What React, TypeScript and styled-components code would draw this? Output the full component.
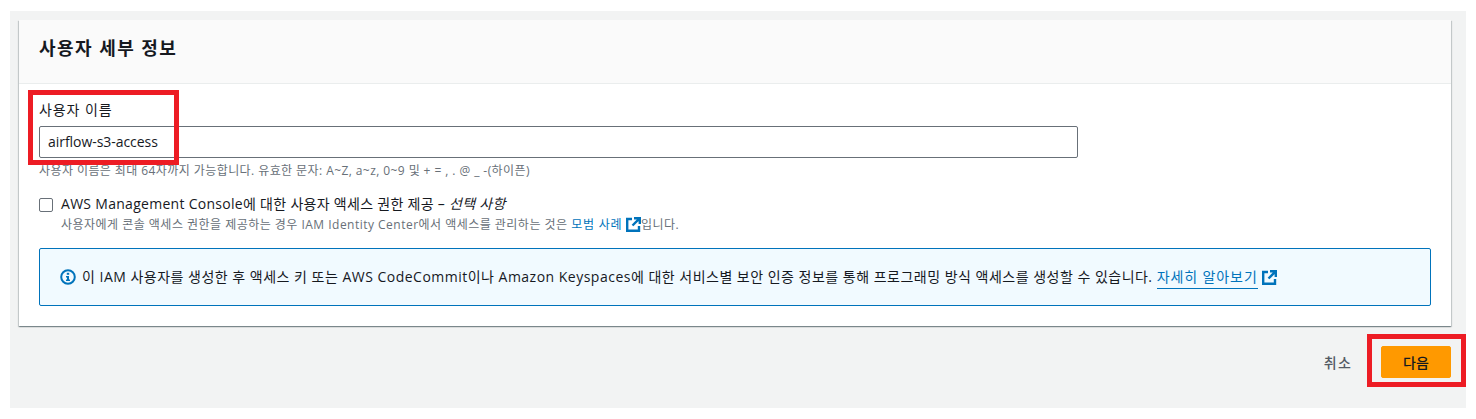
import React from "react";
import styled, { createGlobalStyle } from "styled-components";

const Global = createGlobalStyle`
  html, body { margin: 0; padding: 0; background: #fff; }
  body { font-family: "Open Sans", "Noto Sans CJK KR", sans-serif; color: #16191f; }
  * { box-sizing: border-box; }
`;

const Page = styled.div`
  position: relative;
  width: 1476px;
  height: 419px;
  padding: 11px 10px;
  overflow: hidden;
`;
const Shell = styled.main`
  width: 1456px;
  height: 397px;
  background: #f2f3f3;
  padding: 9px 15px 0 9px;
`;
const Card = styled.section`
  height: 306px;
  background: #fff;
  box-shadow: 0 1px 1px 0 rgba(0, 28, 36, 0.3), 1px 1px 1px 0 rgba(0, 28, 36, 0.15), -1px 1px 1px 0 rgba(0, 28, 36, 0.15);
`;
const CardHeader = styled.header`
  height: 64px;
  background: #fafafa;
  border-bottom: 1px solid #eaeded;
  padding: 0 20px 7px;
  display: flex;
  align-items: center;
`;
const Title = styled.h2`
  margin: 0;
  font-size: 18px;
  font-weight: 700;
  line-height: 22px;
  letter-spacing: 1.45px;
`;
const CardBody = styled.div`
  padding: 16px 20px 0;
`;
const Label = styled.label`
  display: block;
  font-size: 14px;
  line-height: 20px;
  height: 26px;
  letter-spacing: 0.9px;
`;
const TextInput = styled.div`
  width: 1039px;
  height: 32px;
  border: 1px solid #687078;
  border-radius: 2px;
  padding: 0 8px;
  font-size: 14px;
  line-height: 30px;
  letter-spacing: -0.05px;
  background: #fff;
`;
const Hint = styled.p`
  margin: 5px 0 0;
  font-size: 12px;
  line-height: 16px;
  color: #687078;
  letter-spacing: 0.42px;
`;
const CheckRow = styled.div`
  display: flex;
  gap: 8px;
  margin-top: 15px;
`;
const Box = styled.span`
  flex: none;
  width: 14px;
  height: 14px;
  margin-top: 4px;
  border: 1px solid #687078;
  border-radius: 2px;
  background: #fff;
`;
const CheckTitle = styled.div`
  font-size: 14px;
  line-height: 20px;
  height: 23px;
  letter-spacing: 0.29px;
  em { font-style: italic; }
`;
const CheckHint = styled.div`
  font-size: 12px;
  line-height: 16px;
  color: #687078;
  letter-spacing: 0.48px;
`;
const Link = styled.a`
  color: #0073bb;
  letter-spacing: 0.8px;
`;
const LearnLink = styled.a`
  color: #0073bb;
  border-bottom: 1px solid #0073bb;
  padding-bottom: 2px;
  letter-spacing: 0.9px;
`;
const Alert = styled.div`
  margin-top: 15px;
  width: 1392px;
  height: 58px;
  background: #f1faff;
  border: 1px solid #0073bb;
  border-radius: 2px;
  padding: 0 20px;
  display: flex;
  align-items: center;
  gap: 6px;
  font-size: 14px;
  line-height: 20px;
  letter-spacing: 0.49px;
`;
const Footer = styled.footer`
  display: flex;
  justify-content: flex-end;
  align-items: center;
  margin-top: 20px;
  gap: 28.5px;
`;
const Cancel = styled.span`
  font-size: 14px;
  font-weight: 500;
  color: #545b64;
  letter-spacing: 1.5px;
`;
const Primary = styled.button`
  width: 70px;
  height: 32px;
  border: 1px solid #ff9900;
  border-radius: 2px;
  background: #ff9900;
  color: #16191f;
  font: 500 14px "Open Sans", "Noto Sans CJK KR", sans-serif;
  padding: 0;
`;
const Mark = styled.div<{ $x: number; $y: number; $w: number; $h: number }>`
  position: absolute;
  left: ${(p) => p.$x}px;
  top: ${(p) => p.$y}px;
  width: ${(p) => p.$w}px;
  height: ${(p) => p.$h}px;
  border: 5px solid #ed1c24;
`;

const External = () => (
  <svg width={15} height={15} viewBox="0 0 15 15" fill="none" stroke="#0073bb" strokeWidth="2.4" style={{ verticalAlign: "-3px" }}>
    <path d="M6 2H1.2v11.8H13V9" />
    <path d="M8 1.2h5.8V7M13.6 1.4 6.5 8.5" />
  </svg>
);

const Info = () => (
  <svg width="16" height="16" viewBox="0 0 16 16" style={{ flex: "none" }}>
    <circle cx="8" cy="8" r="6.8" fill="none" stroke="#0073bb" strokeWidth="2" />
    <rect x="6.8" y="3.8" width="2.4" height="2" fill="#0073bb" />
    <path d="M6 7h3v3.6h1V12H6v-1.4h1V8.4H6z" fill="#0073bb" />
  </svg>
);

export default function App() {
  return (
    <Page>
      <Global />
      <Shell>
        <Card>
          <CardHeader>
            <Title>사용자 세부 정보</Title>
          </CardHeader>
          <CardBody>
            <Label>사용자 이름</Label>
            <TextInput>airflow-s3-access</TextInput>
            <Hint>사용자 이름은 최대 64자까지 가능합니다. 유효한 문자: A~Z, a~z, 0~9 및 + = , . @ _ -(하이픈)</Hint>
            <CheckRow>
              <Box />
              <div>
                <CheckTitle>
                  AWS Management Console에 대한 사용자 액세스 권한 제공 – <em>선택 사항</em>
                </CheckTitle>
                <CheckHint>
                  사용자에게 콘솔 액세스 권한을 제공하는 경우 IAM Identity Center에서 액세스를 관리하는 것은 <Link>모범 사례</Link>{" "}
                  <External />입니다.
                </CheckHint>
              </div>
            </CheckRow>
            <Alert>
              <Info />
              <span>
                이 IAM 사용자를 생성한 후 액세스 키 또는 AWS CodeCommit이나 Amazon Keyspaces에 대한 서비스별 보안 인증 정보를 통해 프로그래밍 방식 액세스를 생성할 수 있습니다.{" "}
                <LearnLink>자세히 알아보기</LearnLink> <External />
              </span>
            </Alert>
          </CardBody>
        </Card>
        <Footer>
          <Cancel>취소</Cancel>
          <Primary>다음</Primary>
        </Footer>
      </Shell>
      <Mark $x={28} $y={90} $w={151} $h={75} />
      <Mark $x={1367} $y={334} $w={99} $h={53} />
    </Page>
  );
}
